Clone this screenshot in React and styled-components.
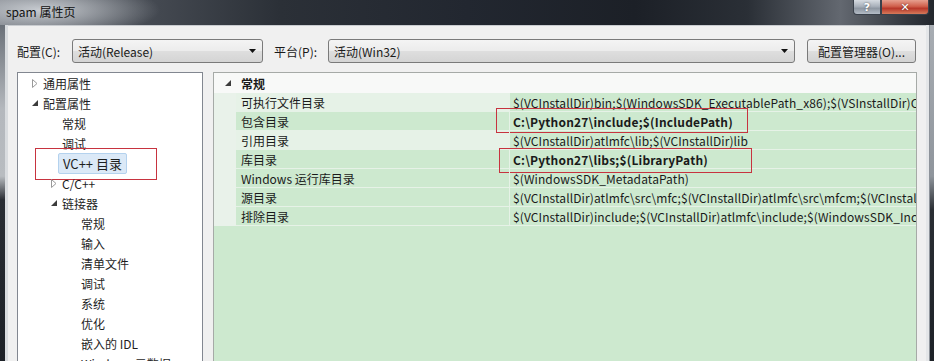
import React from "react"
import styled, { createGlobalStyle } from "styled-components"

const GlobalStyle = createGlobalStyle`
  html, body {
    margin: 0;
    padding: 0;
  }
  body {
    width: 934px;
    height: 361px;
    overflow: hidden;
    background: #1f2329;
    font-family: "Noto Sans CJK SC", "Noto Sans", sans-serif;
  }
`

const Window = styled.div`
  width: 934px;
  height: 361px;
  display: flex;
  flex-direction: column;
  overflow: hidden;
`

const TitleBar = styled.div`
  height: 25px;
  flex: none;
  display: flex;
  justify-content: space-between;
  align-items: flex-start;
  background:
    radial-gradient(ellipse 120px 28px at 40px 10px, rgba(205, 209, 214, 0.95), rgba(205, 209, 214, 0) 100%),
    linear-gradient(90deg, #6c7179 0%, #454a52 16%, #2b3037 30%, #222730 50%, #1c2027 68%, #2a2f36 80%, #636870 90%, #3a3f46 96%, #23272d 100%);
`

const Title = styled.span`
  padding: 3px 0 0 6px;
  font-size: 12px;
  line-height: 17px;
  color: #111;
`

const CaptionButtons = styled.div`
  display: flex;
  margin-right: 5px;
`

const CaptionButton = styled.div`
  width: ${({ $w }) => $w}px;
  height: 15px;
  box-sizing: border-box;
  display: flex;
  align-items: center;
  justify-content: center;
  border: 1px solid #3a414b;
  border-top: none;
  border-radius: ${({ $close }) => ($close ? "0 0 4px 0" : "0 0 0 4px")};
  background: ${({ $close }) =>
    $close
      ? "linear-gradient(180deg, #e6a08f 0%, #d0604c 45%, #b8382a 60%, #d67a5a 100%)"
      : "linear-gradient(180deg, #d6dbe1 0%, #a9b1bb 45%, #8e97a2 60%, #b4bcc6 100%)"};
  color: #fff;
  font-size: 11px;
  font-weight: bold;
  font-family: "DejaVu Sans", sans-serif;
  line-height: 1;
  text-shadow: 0 0 2px rgba(0, 0, 0, 0.6);
`

const FrameBody = styled.div`
  flex: 1;
  display: flex;
  min-height: 0;
`

const FrameSide = styled.div`
  width: 8px;
  flex: none;
  box-sizing: border-box;
  background: ${({ $right }) =>
    $right
      ? "linear-gradient(90deg, #e4e6e8 0 3px, #8d939a 3px 4px, transparent 4px), linear-gradient(180deg, #a8adb3 0%, #8f959c 45%, #2a2e34 55%, #1d2127 100%)"
      : "linear-gradient(90deg, transparent 0 5px, #d9dcdf 5px 8px), linear-gradient(180deg, #6a7078 0%, #b4b8bd 25%, #b8bcc0 45%, #2a2e34 52%, #1d2127 100%)"};
`

const Client = styled.div`
  flex: 1;
  display: flex;
  flex-direction: column;
  padding: 14px 9px 0 9px;
  background: #f0f0f0;
  border-top: 1px solid #c9ccd0;
  min-width: 0;
  min-height: 0;
`

const Toolbar = styled.div`
  height: 24px;
  display: flex;
  align-items: center;
  flex: none;
  margin-top: -1px;
`

const FieldLabel = styled.span`
  width: ${({ $w }) => $w}px;
  font-size: 12px;
  color: #1a1a1a;
  flex: none;
  margin-left: ${({ $ml }) => $ml || 0}px;
`

const Combo = styled.div`
  width: ${({ $w }) => $w}px;
  height: 24px;
  box-sizing: border-box;
  flex: none;
  display: flex;
  align-items: center;
  justify-content: space-between;
  padding: 0 6px 0 5px;
  border: 1px solid #7a7a7a;
  border-radius: 3px;
  background: linear-gradient(180deg, #f4f4f4 0%, #ececec 48%, #dedede 52%, #d4d4d4 100%);
  font-size: 12px;
  color: #1a1a1a;
`

const Button = styled.div`
  width: 109px;
  height: 24px;
  box-sizing: border-box;
  margin-left: 12px;
  flex: none;
  display: flex;
  align-items: center;
  justify-content: center;
  border: 1px solid #7a7a7a;
  border-radius: 3px;
  background: linear-gradient(180deg, #f4f4f4 0%, #ececec 48%, #dedede 52%, #d2d2d2 100%);
  font-size: 12px;
  color: #1a1a1a;
`

const Panels = styled.div`
  flex: 1;
  display: flex;
  gap: 10px;
  margin-top: 9px;
  min-height: 0;
`

const Tree = styled.div`
  width: 186px;
  box-sizing: border-box;
  flex: none;
  border: 1px solid #828790;
  border-bottom: none;
  background: #ffffff;
  overflow: hidden;
`

const TreeRow = styled.div`
  position: relative;
  height: 20px;
  display: flex;
  align-items: center;
  padding-left: ${({ $level }) => 14 + $level * 19}px;
  font-size: 12px;
  color: #1e1e1e;
  white-space: nowrap;
`

const Toggle = styled.span`
  width: 11px;
  flex: none;
  display: flex;
  align-items: center;
`

const TreeLabel = styled.span`
  display: flex;
  align-items: center;
  height: ${({ $selected }) => ($selected ? "21px" : "auto")};
  margin-left: ${({ $selected }) => ($selected ? "-4px" : "0")};
  padding: ${({ $selected }) => ($selected ? "0 4px" : "0")};
  box-sizing: border-box;
  border: ${({ $selected }) => ($selected ? "1px solid #b4d2ee" : "none")};
  border-radius: 2px;
  background: ${({ $selected }) => ($selected ? "#dbe9f7" : "transparent")};
  font-size: ${({ $selected }) => ($selected ? "13px" : "12px")};
`

const Mark = styled.div`
  position: absolute;
  left: ${({ $x }) => $x}px;
  top: ${({ $y }) => $y}px;
  width: ${({ $w }) => $w}px;
  height: ${({ $h }) => $h}px;
  box-sizing: border-box;
  border: 1px solid #c7333f;
  pointer-events: none;
`

const PropPanel = styled.div`
  flex: 1;
  box-sizing: border-box;
  border: 1px solid #a6aaa7;
  border-bottom: none;
  background: #cde9cf;
  overflow: hidden;
  min-width: 0;
`

const Category = styled.div`
  height: 20px;
  display: flex;
  align-items: center;
  background: #f8f9f8;
  font-size: 12px;
  font-weight: bold;
  color: #1a1a1a;
`

const CategoryTitle = styled.span`
  padding-left: 5px;
`

const Gutter = styled.span`
  width: 22px;
  flex: none;
  display: flex;
  align-items: center;
  padding-left: ${({ $pad }) => $pad || 0}px;
  box-sizing: border-box;
  align-self: stretch;
  background: ${({ $bg }) => $bg || "transparent"};
`

const PropRow = styled.div`
  height: 19px;
  display: flex;
  font-size: 12px;
  color: #1a1a1a;
  white-space: nowrap;
`

const PropName = styled.span`
  width: 273px;
  flex: none;
  box-sizing: border-box;
  display: flex;
  align-items: center;
  padding-left: 5px;
  border-bottom: 1px solid #e6f2e7;
  background: ${({ $light }) => ($light ? "#e6f2e7" : "#cde9cf")};
`

const PropValue = styled.span`
  position: relative;
  flex: 1;
  min-width: 0;
  box-sizing: border-box;
  display: flex;
  align-items: center;
  padding-left: 3px;
  border-left: 1px solid #e6f2e7;
  border-bottom: 1px solid #e6f2e7;
  font-weight: ${({ $bold }) => ($bold ? "bold" : "normal")};
  letter-spacing: ${({ $bold }) => ($bold ? "0.2px" : "0.1px")};
`

const ValueText = styled.span`
  overflow: hidden;
  white-space: nowrap;
  flex: 1;
  min-width: 0;
`

const Collapsed = () => (
  <svg width="6" height="9" viewBox="0 0 6 9">
    <path d="M0.5 0.5 L5 4.5 L0.5 8.5 Z" fill="none" stroke="#9a9a9a" strokeWidth="1" />
  </svg>
)

const Expanded = () => (
  <svg width="6" height="6" viewBox="0 0 6 6">
    <path d="M6 0 L6 6 L0 6 Z" fill="#3c3c3c" />
  </svg>
)

const ComboArrow = () => (
  <svg width="7" height="4" viewBox="0 0 7 4">
    <path d="M0 0 L7 0 L3.5 4 Z" fill="#111" />
  </svg>
)

const treeItems = [
  { label: "通用属性", level: 0, toggle: "collapsed" },
  { label: "配置属性", level: 0, toggle: "expanded" },
  { label: "常规", level: 1 },
  { label: "调试", level: 1 },
  { label: "VC++ 目录", level: 1, selected: true },
  { label: "C/C++", level: 1, toggle: "collapsed" },
  { label: "链接器", level: 1, toggle: "expanded" },
  { label: "常规", level: 2 },
  { label: "输入", level: 2 },
  { label: "清单文件", level: 2 },
  { label: "调试", level: 2 },
  { label: "系统", level: 2 },
  { label: "优化", level: 2 },
  { label: "嵌入的 IDL", level: 2 },
  { label: "Windows 元数据", level: 2 },
]

const props = [
  {
    name: "可执行文件目录",
    value: "$(VCInstallDir)bin;$(WindowsSDK_ExecutablePath_x86);$(VSInstallDir)Common7\\Tools\\bin;$(VSInstallDir)Common7\\tools",
    light: true,
  },
  {
    name: "包含目录",
    value: "C:\\Python27\\include;$(IncludePath)",
    bold: true,
    mark: { x: -14, y: -4, w: 252, h: 25 },
  },
  { name: "引用目录", value: "$(VCInstallDir)atlmfc\\lib;$(VCInstallDir)lib", light: true },
  {
    name: "库目录",
    value: "C:\\Python27\\libs;$(LibraryPath)",
    bold: true,
    mark: { x: -11, y: -2, w: 253, h: 25 },
  },
  { name: "Windows 运行库目录", value: "$(WindowsSDK_MetadataPath)" },
  {
    name: "源目录",
    value: "$(VCInstallDir)atlmfc\\src\\mfc;$(VCInstallDir)atlmfc\\src\\mfcm;$(VCInstallDir)atlmfc\\src\\atl;$(VCInstallDir)crt\\src",
  },
  {
    name: "排除目录",
    value: "$(VCInstallDir)include;$(VCInstallDir)atlmfc\\include;$(WindowsSDK_IncludePath);$(MSBuildToolsPath32)",
  },
]

export default function App() {
  return (
    <>
      <GlobalStyle />
      <Window>
        <TitleBar>
          <Title>spam 属性页</Title>
          <CaptionButtons>
            <CaptionButton $w={28}>?</CaptionButton>
            <CaptionButton $w={48} $close>
              ✕
            </CaptionButton>
          </CaptionButtons>
        </TitleBar>
        <FrameBody>
          <FrameSide />
          <Client>
            <Toolbar>
              <FieldLabel $w={55}>配置(C):</FieldLabel>
              <Combo $w={191}>
                <span>活动(Release)</span>
                <ComboArrow />
              </Combo>
              <FieldLabel $w={54} $ml={11}>
                平台(P):
              </FieldLabel>
              <Combo $w={467}>
                <span>活动(Win32)</span>
                <ComboArrow />
              </Combo>
              <Button>配置管理器(O)...</Button>
            </Toolbar>
            <Panels>
              <Tree>
                {treeItems.map((item, i) => (
                  <TreeRow key={i} $level={item.level}>
                    <Toggle>
                      {item.toggle === "collapsed" && <Collapsed />}
                      {item.toggle === "expanded" && <Expanded />}
                    </Toggle>
                    <TreeLabel $selected={item.selected}>{item.label}</TreeLabel>
                    {item.selected && <Mark $x={17} $y={-5} $w={122} $h={32} />}
                  </TreeRow>
                ))}
              </Tree>
              <PropPanel>
                <Category>
                  <Gutter $pad={11}>
                    <Expanded />
                  </Gutter>
                  <CategoryTitle>常规</CategoryTitle>
                </Category>
                {props.map((p, i) => (
                  <PropRow key={i}>
                    <Gutter $bg="#e9f2ea" />
                    <PropName $light={p.light}>{p.name}</PropName>
                    <PropValue $bold={p.bold}>
                      <ValueText>{p.value}</ValueText>
                      {p.mark && <Mark $x={p.mark.x} $y={p.mark.y} $w={p.mark.w} $h={p.mark.h} />}
                    </PropValue>
                  </PropRow>
                ))}
              </PropPanel>
            </Panels>
          </Client>
          <FrameSide $right />
        </FrameBody>
      </Window>
    </>
  )
}
